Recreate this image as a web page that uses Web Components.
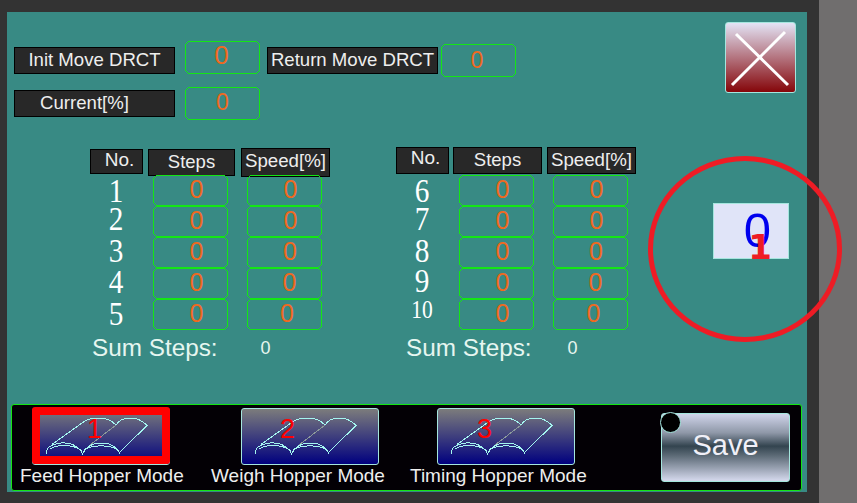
<!DOCTYPE html>
<html>
<head>
<meta charset="utf-8">
<title>Hopper setup</title>
<style>
  html, body { margin: 0; padding: 0; background: #333; }
  body { font-family: "Liberation Sans", Arial, sans-serif; }
</style>
</head>
<body>
<hmi-screen></hmi-screen>

<script>
/* ================= SMALL PARTS ================= */
class HmiLabel extends HTMLElement {
  constructor() {
    super();
    this.attachShadow({ mode: "open" });
    this.shadowRoot.innerHTML = `
      <style>
        :host {
          display: flex;
          align-items: center;
          justify-content: center;
          box-sizing: border-box;
          width: var(--w, 161px);
          height: var(--h, 27px);
          padding-bottom: var(--pb, 1px);
          padding-left: var(--pl, 0);
          padding-right: var(--pr, 0);
          background: #282828;
          border: 1px solid #000;
          color: #eee;
          font: var(--fs, 18.600px) "Liberation Sans", sans-serif;
          white-space: nowrap;
        }
      </style>
      <slot></slot>`;
  }
}

class NumBox extends HTMLElement {
  constructor() {
    super();
    this.attachShadow({ mode: "open" });
  }

  connectedCallback() {
    // chamfered outline, the panel draws these corners without smoothing
    const h = Number(this.getAttribute("h") || 31);
    const pts = `3.5,.5 71.5,.5 74.5,3.5 74.5,${h - 3.5} 71.5,${h - .5} 3.5,${h - .5} .5,${h - 3.5} .5,3.5`;
    this.shadowRoot.innerHTML = `
      <style>
        :host {
          display: flex;
          align-items: center;
          justify-content: center;
          position: relative;
          box-sizing: border-box;
          width: 75px;
          height: ${h}px;
          padding-left: var(--dx, 12px);
          padding-right: var(--dr, 0);
          padding-bottom: var(--pb, 2px);
          color: #f0691f;
          font: var(--fs, 25px) "Liberation Sans", sans-serif;
        }
        svg { position: absolute; left: 0; top: 0; }
      </style>
      <svg width="75" height="${h}" shape-rendering="crispEdges">
        <polygon points="${pts}" fill="none" stroke="#14e614"/>
      </svg>
      <slot></slot>`;
  }
}

class CloseButton extends HTMLElement {
  constructor() {
    super();
    this.attachShadow({ mode: "open" });
    this.shadowRoot.innerHTML = `
      <style>
        :host {
          display: block;
          box-sizing: border-box;
          width: 71px;
          height: 71px;
          border: 1px solid #a5e6de;
          border-radius: 3px;
          background: linear-gradient(#e3e3f5, #85060a);
        }
        svg { display: block; }
      </style>
      <svg width="69" height="69" viewBox="0 0 69 69">
        <path d="M10 11 L62 62 M59 9 L6 62" stroke="#fff" stroke-width="3" fill="none"/>
      </svg>`;
  }
}

class ModeButton extends HTMLElement {
  constructor() {
    super();
    this.attachShadow({ mode: "open" });
    this.shadowRoot.innerHTML = `
      <style>
        :host {
          display: flex;
          flex-direction: column;
          align-items: flex-start;
          color: #eee;
          font: 19px "Liberation Sans", sans-serif;
          white-space: nowrap;
        }
        .btn {
          position: relative;
          box-sizing: border-box;
          width: 138px;
          height: 57px;
          margin-left: var(--btn-x, 0);
          border: 1px solid #a5e6de;
          border-radius: 3px;
          background: linear-gradient(#7c7c7c, #00007f);
        }
        svg { position: absolute; left: -1px; top: -1px; }
        .num {
          position: absolute;
          left: var(--num-x, 40px);
          top: 5px;
          color: #f00;
          font-size: 27px;
          line-height: 31px;
        }
        :host([selected]) .btn::after {
          content: "";
          position: absolute;
          inset: -2px -1px 0 -1px;
          border: 8px solid #f00;
          border-radius: 3px;
        }
        .label { margin-top: 1px; line-height: 20px; }
      </style>
      <div class="btn">
        <svg width="138" height="57" viewBox="0 0 138 57" fill="none" stroke="#a4f6f0" stroke-width="1" shape-rendering="crispEdges">
          <path d="M20 36.500 L50 15 C54 11 62 10 68 10 C74 10 79 12 84 17 C87 12 92 10 98 10 C105 10 111 13 115 17.500 L88 44"/>
          <path d="M14 46 C14 40 20 36 29 35 C38 34 47 38 50.500 46 C54 38 62 35 70 35 C78 35 85 39 88 46"/>
          <path d="M18 41 C24 37 40 35 50 43 M52 42 C60 37 76 36 86 42"/>
          <path d="M84 17 L58 37" stroke="#8c9a9a"/>
        </svg>
        <span class="num">${this.getAttribute("num")}</span>
      </div>
      <div class="label"><slot></slot></div>`;
  }
}

class SaveButton extends HTMLElement {
  constructor() {
    super();
    this.attachShadow({ mode: "open" });
    this.shadowRoot.innerHTML = `
      <style>
        :host {
          display: flex;
          align-items: center;
          justify-content: center;
          position: relative;
          box-sizing: border-box;
          width: 129px;
          height: 69px;
          padding-bottom: 5px;
          border: 1px solid #a5e6de;
          border-radius: 3px;
          background: linear-gradient(#d0d4ea 0%, #8f98a8 28%, #33444f 48%, #5c6a76 62%, #d6daee 100%);
          color: #f0f0f8;
          font: 29px "Liberation Sans", sans-serif;
        }
        .dot {
          position: absolute;
          left: -2px;
          top: -2px;
          box-sizing: border-box;
          width: 21px;
          height: 21px;
          border-radius: 50%;
          background: #000;
          border: 1px solid #a5e6de;
        }
      </style>
      <span class="dot"></span><slot></slot>`;
  }
}

class ValueDisplay extends HTMLElement {
  constructor() {
    super();
    this.attachShadow({ mode: "open" });
    this.shadowRoot.innerHTML = `
      <style>
        :host {
          display: flex;
          align-items: center;
          justify-content: center;
          position: relative;
          box-sizing: border-box;
          width: 76px;
          height: 56px;
          padding-left: 13px;
          padding-bottom: 2px;
          background: #e0e4f8;
          border: 1px solid #a5e6de;
          color: #0000ee;
          font: 49px "Liberation Sans", sans-serif;
        }
        .badge {
          position: absolute;
          right: 16px;
          bottom: -9px;
          color: #ee1c25;
          font: bold 34px/40px "DejaVu Sans", sans-serif;
        }
      </style>
      <slot></slot><span class="badge">1</span>`;
  }
}

/* ================= STEP TABLE ================= */
class StepTable extends HTMLElement {
  constructor() {
    super();
    this.attachShadow({ mode: "open" });
  }

  connectedCallback() {
    const first = Number(this.getAttribute("first"));
    const nudge = this.getAttribute("nudge").split(",");
    const speedX = this.getAttribute("speed-x").split(",");

    let rows = "";
    for (let i = 0; i < 5; i++) {
      const n = first + i;
      rows += `
        <div class="no" style="margin-top:${nudge[i]}px;${n === 10 ? "font-size:25px" : ""}">${n}</div>
        <num-box class="c1">0</num-box>
        <num-box class="c2" style="--dx:${speedX[i]}px">0</num-box>`;
    }

    this.shadowRoot.innerHTML = `
      <style>
        :host {
          display: block;
          width: var(--table-w);
          color: #fff;
          font-family: "Liberation Sans", sans-serif;
        }
        .head {
          display: flex;
          align-items: flex-start;
          height: 28px;
          position: relative;
          z-index: 0;
        }
        .rows {
          display: grid;
          grid-template-columns: 52px 11px 75px 19px 75px;
          grid-auto-rows: 31px;
          position: relative;
          z-index: 1;
        }
        .no {
          grid-column: 1;
          text-align: center;
          font: 34px/31px "Liberation Serif", serif;
          color: #fff;
          transform: scaleX(.86);
        }
        .c1 { grid-column: 3; }
        .c2 { grid-column: 5; }
        .sum {
          display: flex;
          height: 34px;
          margin-top: 1px;
          align-items: center;
          color: #e6f6f0;
          font-size: 24.300px;
          padding-left: var(--sum-x);
        }
        .sum b {
          font-weight: normal;
          font-size: 18px;
          margin-left: var(--sum-gap);
        }
        ::slotted(*) { flex: none; }
      </style>
      <div class="head"><slot></slot></div>
      <div class="rows">${rows}</div>
      <div class="sum">Sum Steps:<b>0</b></div>`;
  }
}

/* ================= SCREEN ================= */
class HmiScreen extends HTMLElement {
  constructor() {
    super();
    this.attachShadow({ mode: "open" });
    this.shadowRoot.innerHTML = `
      <style>
        :host {
          display: flex;
          position: relative;
          width: 857px;
          height: 503px;
          overflow: hidden;
          background: #333;
          color: #eee;
          font-family: "Liberation Sans", sans-serif;
        }
        .panel {
          display: flex;
          flex-direction: column;
          width: 800px;
          height: 480px;
          margin: 12px 0 0 7px;
          background: #388a84;
        }
        .strip { width: 38px; margin-left: 12px; background: #706e6e; }

        /* TOP */
        .top { display: flex; justify-content: space-between; height: 108px; }
        .settings { margin: 29px 0 0 7px; }
        .row1 { display: flex; align-items: flex-start; height: 36px; }
        .row2 { display: flex; align-items: flex-start; margin-top: 10px; }
        .row1 hmi-label { margin-top: 6px; }
        .row2 hmi-label { margin-top: 3px; }
        close-button { margin: 10px 11px 0 0; }

        /* MIDDLE */
        .middle { display: flex; align-items: flex-start; margin: 27px 0 0 83px; }
        value-display { margin-top: 56px; }

        /* BOTTOM */
        .bar {
          display: flex;
          align-items: flex-start;
          box-sizing: border-box;
          height: 87px;
          margin: auto 5px 1px 4px;
          padding: 3px 0 0 8px;
          background: #030005;
          border: 1px solid #14e614;
          border-radius: 3px;
        }
        save-button { margin: 5px 0 0 75px; }

        .circle {
          position: absolute;
          left: 648px;
          top: 156px;
          box-sizing: border-box;
          width: 194px;
          height: 186px;
          border: 5px solid #ee1c25;
          border-radius: 50%;
        }
      </style>

      <div class="panel">
        <div class="top">
          <div class="settings">
            <div class="row1">
              <hmi-label>Init Move DRCT</hmi-label>
              <num-box h="33" style="--fs:26px;--dx:0px;--dr:2px;--pb:5px;margin-left:10px">0</num-box>
              <hmi-label style="--w:171px;margin-left:7px">Return Move DRCT</hmi-label>
              <num-box h="33" style="--fs:23px;--dx:0px;--dr:3px;--pb:0px;margin:3px 0 0 3px">0</num-box>
            </div>
            <div class="row2">
              <hmi-label style="--pr:20px">Current[%]</hmi-label>
              <num-box h="33" style="--fs:23px;--dx:0px;--pb:3px;margin-left:10px">0</num-box>
            </div>
          </div>
          <close-button></close-button>
        </div>

        <div class="middle">
          <step-table first="1" nudge="0,-3,-2,-2,-1" speed-x="12,12,11,10,5"
            style="--table-w:306px;--sum-x:2px;--sum-gap:43px">
            <hmi-label style="--w:53px;--h:25px;--pl:6px;--pb:4px;--fs:19px;margin-top:2px">No.</hmi-label>
            <hmi-label style="--w:87px;--h:27px;--pb:2px;--fs:18.500px;margin:2px 0 0 5px">Steps</hmi-label>
            <hmi-label style="--w:89px;--h:29px;--pb:4px;--fs:18.700px;margin:1px 0 0 6px">Speed[%]</hmi-label>
          </step-table>
          <step-table first="6" nudge="0,-3,-2,-3,-5" speed-x="12,12,11,10,6"
            style="--table-w:317px;--sum-x:10px;--sum-gap:36px">
            <hmi-label style="--w:53px;--h:27px;--pl:6px;--pb:6px;--fs:19px">No.</hmi-label>
            <hmi-label style="--w:89px;--h:27px;--pb:2px;--fs:18.500px;margin-left:4px">Steps</hmi-label>
            <hmi-label style="--w:89px;--h:27px;--pb:2px;--fs:18.700px;margin-left:5px">Speed[%]</hmi-label>
          </step-table>
          <value-display>0</value-display>
        </div>

        <div class="bar">
          <mode-button num="1" selected style="--btn-x:12px;--num-x:54px;width:191px">Feed Hopper Mode</mode-button>
          <mode-button num="2" style="--btn-x:30px;--num-x:38px;width:199px">Weigh Hopper Mode</mode-button>
          <mode-button num="3" style="--btn-x:27px;--num-x:39px;width:176px">Timing Hopper Mode</mode-button>
          <save-button>Save</save-button>
        </div>
      </div>
      <div class="strip"></div>
      <div class="circle"></div>`;
  }
}

customElements.define("hmi-label", HmiLabel);
customElements.define("num-box", NumBox);
customElements.define("close-button", CloseButton);
customElements.define("mode-button", ModeButton);
customElements.define("save-button", SaveButton);
customElements.define("value-display", ValueDisplay);
customElements.define("step-table", StepTable);
customElements.define("hmi-screen", HmiScreen);
</script>
</body>
</html>
